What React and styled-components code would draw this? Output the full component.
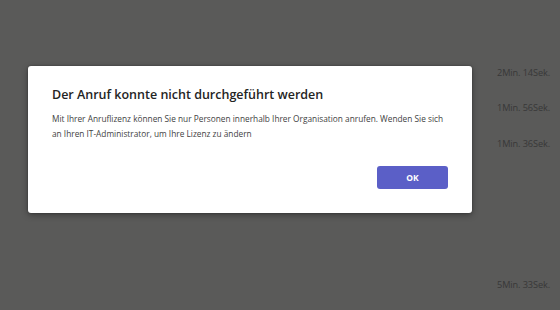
import React from "react";
import styled, { createGlobalStyle } from "styled-components";

const calls = [
  { id: 1, left: "", duration: "2Min. 14Sek." },
  { id: 2, left: "t", duration: "1Min. 56Sek." },
  { id: 3, left: "", duration: "1Min. 36Sek." },
  { id: 4, left: "i", duration: "" },
  { id: 5, left: "i", duration: "" },
  { id: 6, left: "i", duration: "" },
  { id: 7, left: "", duration: "5Min. 33Sek." },
];

export default function App() {
  return (
    <>
      <GlobalStyle />
      <Page>
        <CallList>
          {calls.map(({ id, left, duration }) => (
            <CallRow key={id}>
              <CutName>{left}</CutName>
              <Duration>{duration}</Duration>
            </CallRow>
          ))}
        </CallList>

        <Dialog role="dialog">
          <Title>Der Anruf konnte nicht durchgeführt werden</Title>
          <Message>
            Mit Ihrer Anruflizenz können Sie nur Personen innerhalb Ihrer
            Organisation anrufen. Wenden Sie sich an Ihren IT-Administrator, um
            Ihre Lizenz zu ändern
          </Message>
          <Actions>
            <OkButton>OK</OkButton>
          </Actions>
        </Dialog>
      </Page>
    </>
  );
}

const GlobalStyle = createGlobalStyle`
  html, body {
    margin: 0;
    padding: 0;
    background: #5a5a59;
  }
  body {
    font-family: "Open Sans", "Noto Sans", sans-serif;
  }
`;

const Page = styled.div`
  position: relative;
  width: 560px;
  height: 310px;
  overflow: hidden;
  background: #5a5a59;
`;

const CallList = styled.div`
  display: grid;
  grid-auto-rows: 35.33px;
  padding-top: 55px;
`;

const CallRow = styled.div`
  display: flex;
  align-items: center;
  justify-content: space-between;
  padding: 0 10px 0 0;
  color: #383838;
  font-size: 9.2px;
`;

const CutName = styled.span`
  align-self: flex-start;
  padding-top: 5px;
  margin-left: -3px;
  color: #484848;
  font-size: 8px;
  line-height: 12px;
`;

const Duration = styled.span`
  letter-spacing: -0.1px;
`;

const Dialog = styled.div`
  position: absolute;
  left: 28px;
  top: 66px;
  width: 444px;
  height: 147px;
  box-sizing: border-box;
  padding: 19px 24px 24px 24px;
  display: flex;
  flex-direction: column;
  background: #ffffff;
  border-radius: 3px;
  box-shadow: 0 2px 6px rgba(0, 0, 0, 0.35), 0 0 2px rgba(0, 0, 0, 0.3);
`;

const Title = styled.h2`
  margin: 0;
  font-size: 12.5px;
  font-weight: 600;
  line-height: 20px;
  color: #242424;
`;

const Message = styled.p`
  margin: 6px -6px 0 0;
  font-size: 8.3px;
  line-height: 15px;
  color: #424242;
`;

const Actions = styled.div`
  margin-top: auto;
  display: flex;
  justify-content: flex-end;
`;

const OkButton = styled.button`
  width: 71px;
  height: 23px;
  border: none;
  border-radius: 3px;
  background: #5b5fc7;
  color: #ffffff;
  font-family: "Open Sans", "Noto Sans", sans-serif;
  font-size: 8.5px;
  font-weight: 700;
  cursor: pointer;
`;
